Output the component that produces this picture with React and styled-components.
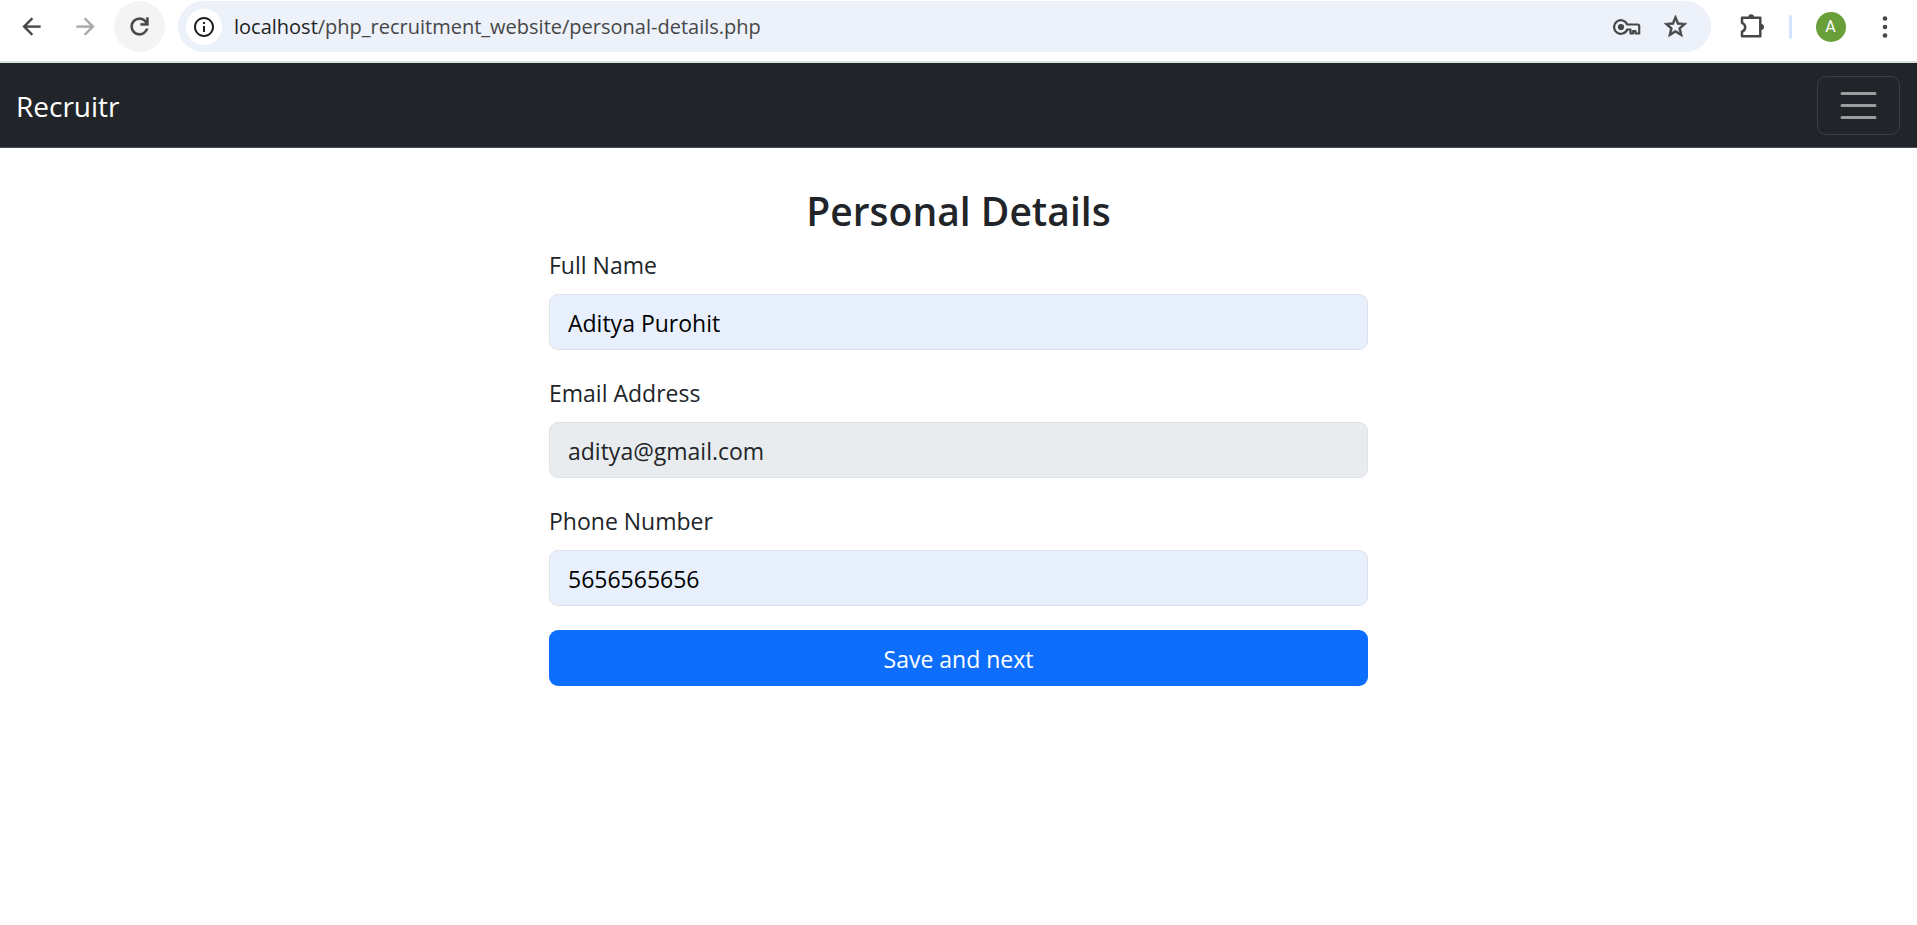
import React from "react";
import styled, { createGlobalStyle } from "styled-components";

const GlobalStyle = createGlobalStyle`
  *, *::before, *::after { box-sizing: border-box; }
  body {
    margin: 0;
    background: #ffffff;
    color: #212529;
    font-family: "Open Sans", "Noto Sans", sans-serif;
    font-size: 23px;
    line-height: 36px;
  }
`;

const Toolbar = styled.header`
  display: flex;
  align-items: flex-start;
  height: 63px;
  padding: 1px 7px 1px 6px;
  border-bottom: 2px solid #dadfe0;
  background: #ffffff;
`;

const IconButton = styled.button`
  display: flex;
  align-items: center;
  justify-content: center;
  flex: none;
  width: ${(p) => p.$width || 51}px;
  height: 51px;
  padding: 0;
  border: 0;
  border-radius: 26px;
  background: ${(p) => (p.$active ? "#f4f4f4" : "transparent")};
  color: ${(p) => (p.$muted ? "#a9a9a9" : "#474747")};
`;

const NavButtons = styled.nav`
  display: flex;
  gap: 3px;
`;

const AddressBar = styled.div`
  display: flex;
  align-items: center;
  flex: 1;
  height: 51px;
  margin-left: 13px;
  padding: 0 12px 0 8px;
  border-radius: 26px;
  background: #ecf1fa;
`;

const SiteInfo = styled.button`
  display: flex;
  align-items: center;
  justify-content: center;
  flex: none;
  width: 36px;
  height: 36px;
  padding: 0;
  border: 0;
  border-radius: 50%;
  background: #ffffff;
  color: #1f1f1f;
`;

const Url = styled.div`
  flex: 1;
  padding-left: 12px;
  color: #474747;
  font-size: 20px;
  line-height: 32px;
  white-space: nowrap;
`;

const Host = styled.span`
  color: #1f1f1f;
`;

const ToolbarEnd = styled.div`
  display: flex;
  align-items: center;
  height: 51px;
  margin-left: 15px;
`;

const AccountButtons = styled.div`
  display: flex;
  gap: 3px;
`;

const Divider = styled.span`
  width: 3px;
  height: 24px;
  margin: 0 13px 0 12px;
  border-radius: 2px;
  background: #d3e3fd;
`;

const Avatar = styled.span`
  display: flex;
  align-items: center;
  justify-content: center;
  width: 30px;
  height: 30px;
  border-radius: 50%;
  background: #689f38;
  color: #ffffff;
  font-family: Roboto, sans-serif;
  font-size: 16px;
`;

const Navbar = styled.nav`
  display: flex;
  align-items: center;
  justify-content: space-between;
  padding: 13px 17px 12px 16px;
  border-bottom: 1px solid #4a4d51;
  background: #212529;
`;

const Brand = styled.a`
  color: #ffffff;
  font-size: 28px;
  line-height: 44px;
  text-decoration: none;
`;

const Toggler = styled.button`
  display: flex;
  align-items: center;
  justify-content: center;
  width: 83px;
  height: 59px;
  padding: 0;
  border: 1px solid #3a3e42;
  border-radius: 9px;
  background: transparent;
  color: #9b9d9f;
`;

const Page = styled.main`
  max-width: 819px;
  margin: 0 auto;
  padding-top: 36px;
`;

const Title = styled.h1`
  margin: 0 0 8px;
  font-size: 39px;
  font-weight: 600;
  line-height: 54px;
  text-align: center;
`;

const Form = styled.form`
  display: flex;
  flex-direction: column;
  gap: 24px;
`;

const Field = styled.div`
  display: flex;
  flex-direction: column;
  gap: 10px;
`;

const Label = styled.label`
  line-height: 38px;
`;

const Input = styled.input`
  width: 100%;
  height: 56px;
  padding: 2px 18px 0;
  border: 1px solid #dee2e6;
  border-radius: 9px;
  outline: 0;
  background: ${(p) => (p.$filled ? "#e8f0fe" : "#e9ecef")};
  color: ${(p) => (p.$filled ? "#000000" : "#212529")};
  font: inherit;
`;

const Submit = styled.button`
  height: 56px;
  padding: 2px 18px 0;
  border: 0;
  border-radius: 9px;
  background: #0d6efd;
  color: #ffffff;
  font: inherit;
`;

const Icon = ({ size = 27, stroke = 0, children }) => (
  <svg width={size} height={size} viewBox="0 0 24 24" fill="currentColor" stroke={stroke ? "currentColor" : "none"} strokeWidth={stroke} aria-hidden="true">
    {children}
  </svg>
);

const fields = [
  { id: "name", label: "Full Name", type: "text", value: "Aditya Purohit" },
  { id: "email", label: "Email Address", type: "email", value: "aditya@gmail.com", readOnly: true },
  { id: "phone", label: "Phone Number", type: "tel", value: "5656565656" },
];

export default function App() {
  return (
    <>
      <GlobalStyle />
      <Toolbar>
        <NavButtons aria-label="History">
          <IconButton aria-label="Back">
            <Icon stroke={0.2}><path d="M20 11H7.83l5.59-5.59L12 4l-8 8 8 8 1.41-1.41L7.83 13H20v-2z" /></Icon>
          </IconButton>
          <IconButton aria-label="Forward" $muted>
            <Icon stroke={0.2}><path d="M12 4l-1.41 1.41L16.17 11H4v2h12.17l-5.58 5.59L12 20l8-8z" /></Icon>
          </IconButton>
          <IconButton aria-label="Reload" $active>
            <Icon stroke={0.3}>
              <path d="M12 20q-3.35 0-5.675-2.325T4 12t2.325-5.675T12 4q1.725 0 3.3.713T18 6.75V4h2v7h-7V9h4.2q-.8-1.4-2.187-2.2T12 6Q9.5 6 7.75 7.75T6 12t1.75 4.25T12 18q1.925 0 3.475-1.1T17.65 14h2.1q-.7 2.65-2.85 4.325T12 20" />
            </Icon>
          </IconButton>
        </NavButtons>
        <AddressBar>
          <SiteInfo aria-label="Site information">
            <Icon size={24}>
              <path d="M11 7h2v2h-2zm0 4h2v6h-2zm1-9C6.48 2 2 6.48 2 12s4.48 10 10 10 10-4.48 10-10S17.52 2 12 2zm0 18c-4.41 0-8-3.59-8-8s3.59-8 8-8 8 3.59 8 8-3.59 8-8 8z" />
            </Icon>
          </SiteInfo>
          <Url><Host>localhost</Host>/php_recruitment_website/personal-details.php</Url>
          <IconButton aria-label="Passwords" $width={48}>
            <svg width="28" height="16" viewBox="0 0 28 16" fill="none" stroke="currentColor" strokeWidth="2.2" strokeLinejoin="round" aria-hidden="true">
              <path d="M14.2 5.5A6.8 6.8 0 1 0 14.2 10.5H17.5V14.5H20V12H22.5V14.5H26.2V7Q26.2 5.5 24.7 5.5Z" />
              <circle cx="8" cy="8" r="3.1" fill="currentColor" stroke="none" />
            </svg>
          </IconButton>
          <IconButton aria-label="Bookmark" $width={48}>
            <Icon stroke={0.6}>
              <path d="M22 9.24l-7.19-.62L12 2 9.19 8.63 2 9.24l5.46 4.73L5.82 21 12 17.27 18.18 21l-1.63-7.03L22 9.24zM12 15.4l-3.76 2.27 1-4.28-3.32-2.88 4.38-.38L12 6.1l1.71 4.04 4.38.38-3.32 2.88 1 4.28L12 15.4z" />
            </Icon>
          </IconButton>
        </AddressBar>
        <ToolbarEnd>
          <IconButton aria-label="Extensions">
            <svg width="26" height="26" viewBox="0 0 26 26" aria-hidden="true">
              <path d="M3 3.7H21.3V22.3H3V17.6Q6.2 16.5 6.2 13.2Q6.2 10 3 8.8Z" fill="none" stroke="currentColor" strokeWidth="2.5" strokeLinejoin="round" />
              <path d="M9.3 3.2a2.9 2.9 0 0 1 5.8 0zM22 10a3 3 0 0 1 0 6z" fill="currentColor" />
            </svg>
          </IconButton>
          <Divider />
          <AccountButtons>
            <IconButton aria-label="Profile"><Avatar>A</Avatar></IconButton>
            <IconButton aria-label="Menu">
              <svg width="6" height="24" viewBox="0 0 6 24" fill="currentColor" aria-hidden="true">
                <circle cx="3" cy="3.5" r="2.3" /><circle cx="3" cy="12" r="2.3" /><circle cx="3" cy="20.5" r="2.3" />
              </svg>
            </IconButton>
          </AccountButtons>
        </ToolbarEnd>
      </Toolbar>
      <Navbar>
        <Brand href="#">Recruitr</Brand>
        <Toggler aria-label="Toggle navigation">
          <svg width="45" height="45" viewBox="0 0 30 30" fill="none" stroke="currentColor" strokeWidth="2" strokeLinecap="round" aria-hidden="true">
            <path d="M4 7h22M4 15h22M4 23h22" />
          </svg>
        </Toggler>
      </Navbar>
      <Page>
        <Title>Personal Details</Title>
        <Form>
          {fields.map((f) => (
            <Field key={f.id}>
              <Label htmlFor={f.id}>{f.label}</Label>
              <Input id={f.id} type={f.type} defaultValue={f.value} readOnly={f.readOnly} $filled={!f.readOnly} />
            </Field>
          ))}
          <Submit type="button">Save and next</Submit>
        </Form>
      </Page>
    </>
  );
}
